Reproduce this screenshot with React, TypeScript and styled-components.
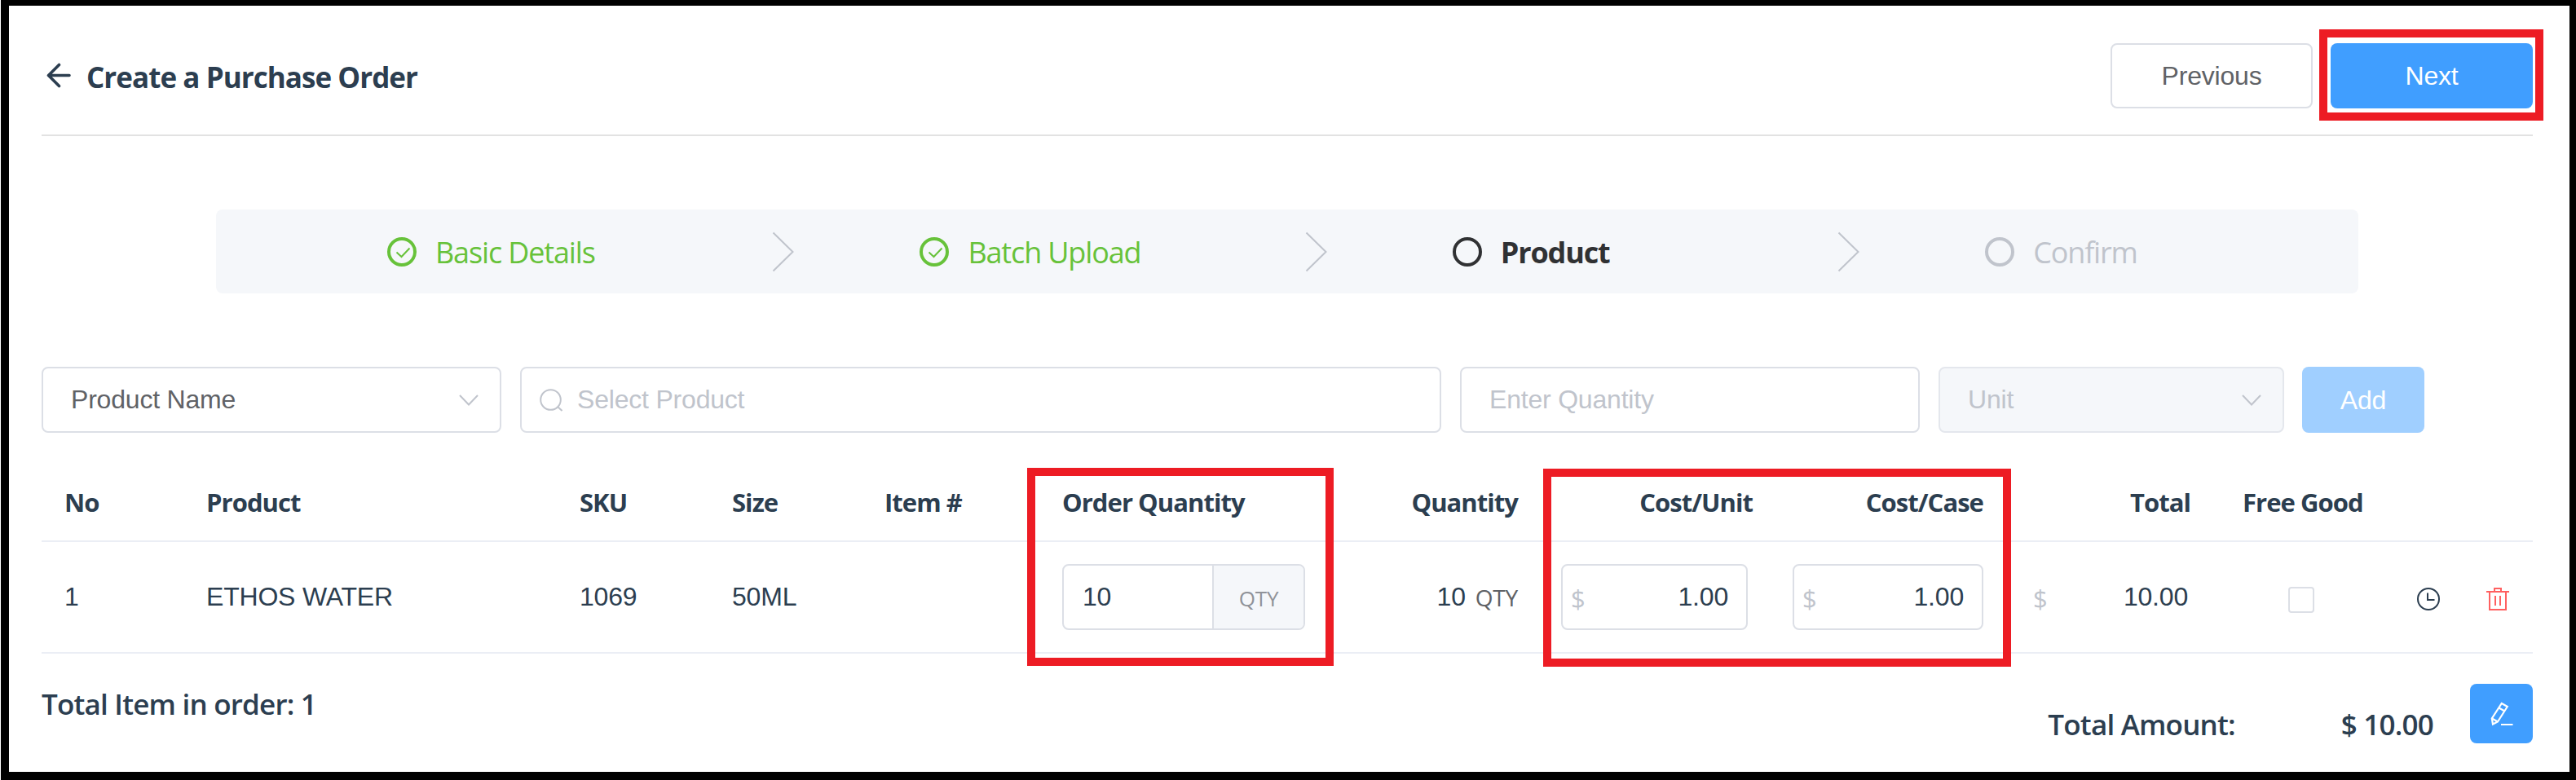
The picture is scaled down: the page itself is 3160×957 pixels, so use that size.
import React from 'react';
import styled, { createGlobalStyle, css } from 'styled-components';

const Global = createGlobalStyle`
  *, *::before, *::after { box-sizing: border-box; }
  body { margin: 0; background: #fff; }
`;

const ui = `'Open Sans', 'Noto Sans', sans-serif`;
const arial = `'Liberation Sans', Arial, sans-serif`;

const Frame = styled.main`
  height: 957px;
  width: 3159px;
  margin-left: 1px;
  border: solid #000;
  border-width: 7px 8px 10px 10px;
  padding: 0 45px 0 40px;
  position: relative;
  display: flex;
  flex-direction: column;
  font-family: ${arial};
  font-size: 32px;
  letter-spacing: -0.2px;
  color: #2c3e50;
  white-space: nowrap;
  overflow: hidden;
`;

const Header = styled.header`
  height: 160px;
  flex: none;
  display: flex;
  justify-content: space-between;
  padding-top: 46px;
  border-bottom: 2px solid #e2e2e2;
`;

const TitleGroup = styled.div`
  display: flex;
  padding-left: 6px;
  svg { margin-top: 24px; }
`;

const Title = styled.h1`
  margin: 0 0 0 18px;
  font: 700 35px/84px ${ui};
  letter-spacing: -0.95px;
`;

const Actions = styled.div`
  display: flex;
  gap: 22px;
`;

const Button = styled.button<{ $kind?: 'primary' | 'muted' | 'plain'; $w: number; $h: number }>`
  width: ${p => p.$w}px;
  height: ${p => p.$h}px;
  padding: 0;
  display: flex;
  align-items: center;
  justify-content: center;
  border-radius: 8px;
  font: 400 32px/1 ${arial};
  letter-spacing: -0.2px;
  color: #fff;
  border: 0;
  background: #409eff;
  ${p => p.$kind === 'muted' && css`background: #a0cfff; margin-left: -1px;`}
  ${p => p.$kind === 'plain' && css`background: #fff; color: #606266; border: 2px solid #dcdfe6;`}
`;

const Steps = styled.ol`
  list-style: none;
  margin: 90px 214px 0;
  padding: 0 0 0 210px;
  height: 103px;
  flex: none;
  display: flex;
  align-items: center;
  background: #f5f7fa;
  border-radius: 8px;
`;

const Step = styled.li<{ $color: string; $bold?: boolean }>`
  width: 653.4px;
  height: 48px;
  flex: none;
  display: flex;
  align-items: center;
  color: ${p => p.$color};
  font: ${p => (p.$bold ? 700 : 400)} 36px/48px ${ui};
  letter-spacing: -1.15px;
  &:last-child { width: auto; }
`;

const StepLabel = styled.span`
  padding-top: 2px;
`;

const Ring = styled.span`
  width: 36px;
  height: 36px;
  border: 4px solid currentColor;
  border-radius: 50%;
  margin-right: 23px;
  display: flex;
  align-items: center;
  justify-content: center;
  svg { margin: 3px 0 0 2px; }
`;

const StepChevron = styled.svg`
  margin-left: auto;
  margin-right: 153px;
`;

const Filters = styled.div`
  display: flex;
  gap: 23px;
  margin-top: 90px;
  height: 81px;
  flex: none;
`;

const Field = styled.div<{ $w: number; $pl?: number; $disabled?: boolean; $filled?: boolean }>`
  width: ${p => p.$w}px;
  height: 81px;
  flex: none;
  display: flex;
  align-items: center;
  justify-content: space-between;
  padding: 0 25px 0 ${p => p.$pl ?? 34}px;
  border: 2px solid ${p => (p.$disabled ? '#e4e7ed' : '#dcdfe6')};
  border-radius: 8px;
  background: ${p => (p.$disabled ? '#f5f7fa' : '#fff')};
  color: ${p => (p.$filled ? '#606266' : '#c0c4cc')};
`;

const SearchHint = styled.div`
  display: flex;
  align-items: center;
  gap: 18px;
`;

const Table = styled.section`
  display: grid;
  grid-template-columns: 202px 458px 187px 187px 218px 331px 228px 315px 283px 254px 214px auto;
  grid-template-rows: 134px 137px;
  flex: none;
`;

const Cell = styled.div<{ $head?: boolean; $end?: boolean; $pr?: number; $pl?: number }>`
  display: flex;
  align-items: center;
  justify-content: ${p => (p.$end ? 'flex-end' : 'flex-start')};
  padding-left: ${p => p.$pl ?? 0}px;
  padding-right: ${p => p.$pr ?? 0}px;
  border-bottom: 2px solid #ebeef5;
  ${p => p.$head && css`
    font: 700 31px/40px ${ui};
    letter-spacing: -0.95px;
    padding-top: 38px;
  `}
`;

const QtyBox = styled.div`
  width: 298px;
  height: 81px;
  display: flex;
  border: 2px solid #dcdfe6;
  border-radius: 8px;
  overflow: hidden;
`;

const QtyValue = styled.div`
  width: 184px;
  padding-left: 23px;
  display: flex;
  align-items: center;
  border-right: 2px solid #dcdfe6;
`;

const QtyUnit = styled.div`
  flex: 1;
  display: flex;
  align-items: center;
  justify-content: center;
  background: #f5f7fa;
  color: #909399;
  font: 400 26px/36px ${ui};
  padding-top: 2px;
`;

const UnitText = styled.span`
  margin-left: 12px;
  font: 400 28px/36px ${ui};
  color: #606266;
`;

const Cost = styled.div<{ $w: number }>`
  width: ${p => p.$w}px;
  height: 81px;
  display: flex;
  align-items: center;
  justify-content: space-between;
  padding: 0 22px 0 10px;
  border: 2px solid #dcdfe6;
  border-radius: 8px;
`;

const Currency = styled.span`
  font: 400 31px/36px ${ui};
  color: #c0c4cc;
  padding-top: 2px;
`;

const TotalCell = styled(Cell)`
  justify-content: space-between;
`;

const Checkbox = styled.span`
  width: 32px;
  height: 32px;
  margin-top: 6px;
  border: 2px solid #dcdfe6;
  border-radius: 4px;
`;

const IconCell = styled(Cell)`
  gap: 57px;
  svg { margin-top: 4px; }
`;

const Footer = styled.footer`
  display: flex;
  align-items: flex-start;
  font: 600 35px/48px ${ui};
  letter-spacing: -0.8px;
`;

const FooterText = styled.div<{ $top: number; $ml?: string; $mr?: number }>`
  margin: ${p => p.$top}px ${p => p.$mr ?? 0}px 0 ${p => p.$ml ?? '0'};
`;

const FooterButton = styled.div`
  margin-top: 37px;
`;

const Highlight = styled.div<{ $x: number; $y: number; $w: number; $h: number }>`
  position: absolute;
  left: ${p => p.$x - 11}px;
  top: ${p => p.$y - 7}px;
  width: ${p => p.$w}px;
  height: ${p => p.$h}px;
  border: 10px solid #ed1c24;
`;

const Check = () => (
  <svg width="19" height="14" viewBox="0 0 19 14" fill="none" stroke="currentColor" strokeWidth="2">
    <path d="M1.500 6.500l6 5.500L17.500 1.500" />
  </svg>
);

const Chevron = () => (
  <StepChevron width="28" height="50" viewBox="0 0 28 50" fill="none" stroke="#c0c4cc" strokeWidth="2">
    <path d="M1.500 1.500L25.500 25L1.500 48.500" />
  </StepChevron>
);

const Down = () => (
  <svg width="26" height="16" viewBox="0 0 26 16" fill="none" stroke="#c0c4cc" strokeWidth="2">
    <path d="M2 2l11 11.500L24 2" />
  </svg>
);

export default function App() {
  return (
    <>
      <Global />
      <Frame>
        <Header>
          <TitleGroup>
            <svg width="31" height="31" viewBox="0 0 31 31" fill="none" stroke="#2c3e50" strokeWidth="3.600" strokeLinecap="round" strokeLinejoin="round">
              <path d="M15.500 2.500L2.500 15.500L15.500 28.500M2.500 15.500H28" />
            </svg>
            <Title>Create a Purchase Order</Title>
          </TitleGroup>
          <Actions>
            <Button $kind="plain" $w={248} $h={80}>Previous</Button>
            <Button $kind="primary" $w={248} $h={80}>Next</Button>
          </Actions>
        </Header>

        <Steps>
          <Step $color="#67c23a"><Ring><Check /></Ring><StepLabel>Basic Details</StepLabel><Chevron /></Step>
          <Step $color="#67c23a"><Ring><Check /></Ring><StepLabel>Batch Upload</StepLabel><Chevron /></Step>
          <Step $color="#303133" $bold><Ring /><StepLabel>Product</StepLabel><Chevron /></Step>
          <Step $color="#c0c4cc"><Ring /><StepLabel>Confirm</StepLabel></Step>
        </Steps>

        <Filters>
          <Field $w={564} $filled><span>Product Name</span><Down /></Field>
          <Field $w={1130} $pl={22}>
            <SearchHint>
              <svg width="28" height="28" viewBox="0 0 28 28" fill="none" stroke="#c0c4cc" strokeWidth="2">
                <circle cx="13.500" cy="13.500" r="12.300" /><path d="M22 22l5.500 5" />
              </svg>
              <span>Select Product</span>
            </SearchHint>
          </Field>
          <Field $w={564}>Enter Quantity</Field>
          <Field $w={424} $disabled><span>Unit</span><Down /></Field>
          <Button $kind="muted" $w={150} $h={81}>Add</Button>
        </Filters>

        <Table>
          <Cell $head $pl={28}>No</Cell>
          <Cell $head>Product</Cell>
          <Cell $head>SKU</Cell>
          <Cell $head>Size</Cell>
          <Cell $head>Item #</Cell>
          <Cell $head>Order Quantity</Cell>
          <Cell $head $end>Quantity</Cell>
          <Cell $head $end $pr={27}>Cost/Unit</Cell>
          <Cell $head $end $pr={27}>Cost/Case</Cell>
          <Cell $head $end $pr={27}>Total</Cell>
          <Cell $head $pl={37}>Free Good</Cell>
          <Cell $head />

          <Cell $pl={28}>1</Cell>
          <Cell>ETHOS WATER</Cell>
          <Cell>1069</Cell>
          <Cell>50ML</Cell>
          <Cell />
          <Cell><QtyBox><QtyValue>10</QtyValue><QtyUnit>QTY</QtyUnit></QtyBox></Cell>
          <Cell $end>10<UnitText>QTY</UnitText></Cell>
          <Cell $end $pr={33}><Cost $w={229}><Currency>$</Currency>1.00</Cost></Cell>
          <Cell $end $pr={27}><Cost $w={234}><Currency>$</Currency>1.00</Cost></Cell>
          <TotalCell $pl={34} $pr={30}><Currency>$</Currency>10.00</TotalCell>
          <Cell $pl={93}><Checkbox /></Cell>
          <IconCell $pl={37}>
            <svg width="28" height="28" viewBox="0 0 28 28" fill="none" stroke="#2c3e50" strokeWidth="2">
              <circle cx="14" cy="14" r="13" /><path d="M13 6.500V15H21.500" />
            </svg>
            <svg width="28" height="28" viewBox="0 0 28 28" fill="none" stroke="#ff6060" strokeWidth="2">
              <path d="M0 5H28M10 5V1H18V5M4 5V27H24V5M11 10V22M17 10V22" />
            </svg>
          </IconCell>
        </Table>

        <Footer>
          <FooterText $top={38}>Total Item in order: 1</FooterText>
          <FooterText $top={63} $ml="auto" $mr={130}>Total Amount:</FooterText>
          <FooterText $top={63} $mr={45}>$ 10.00</FooterText>
          <FooterButton>
            <Button $kind="primary" $w={77} $h={73}>
              <svg width="28" height="32" viewBox="0 0 28 32" fill="none" stroke="#fff" strokeWidth="2.200">
                <path d="M13.800 3L20.800 7L9 25.500L3 28.500L1.800 21.500ZM10.500 8.500L17.500 12.500M2 21.500L9 25.500M13 29H27.500" />
              </svg>
            </Button>
          </FooterButton>
        </Footer>

        <Highlight $x={2845} $y={36} $w={275} $h={112} />
        <Highlight $x={1260} $y={574} $w={376} $h={243} />
        <Highlight $x={1893} $y={575} $w={574} $h={243} />
      </Frame>
    </>
  );
}
